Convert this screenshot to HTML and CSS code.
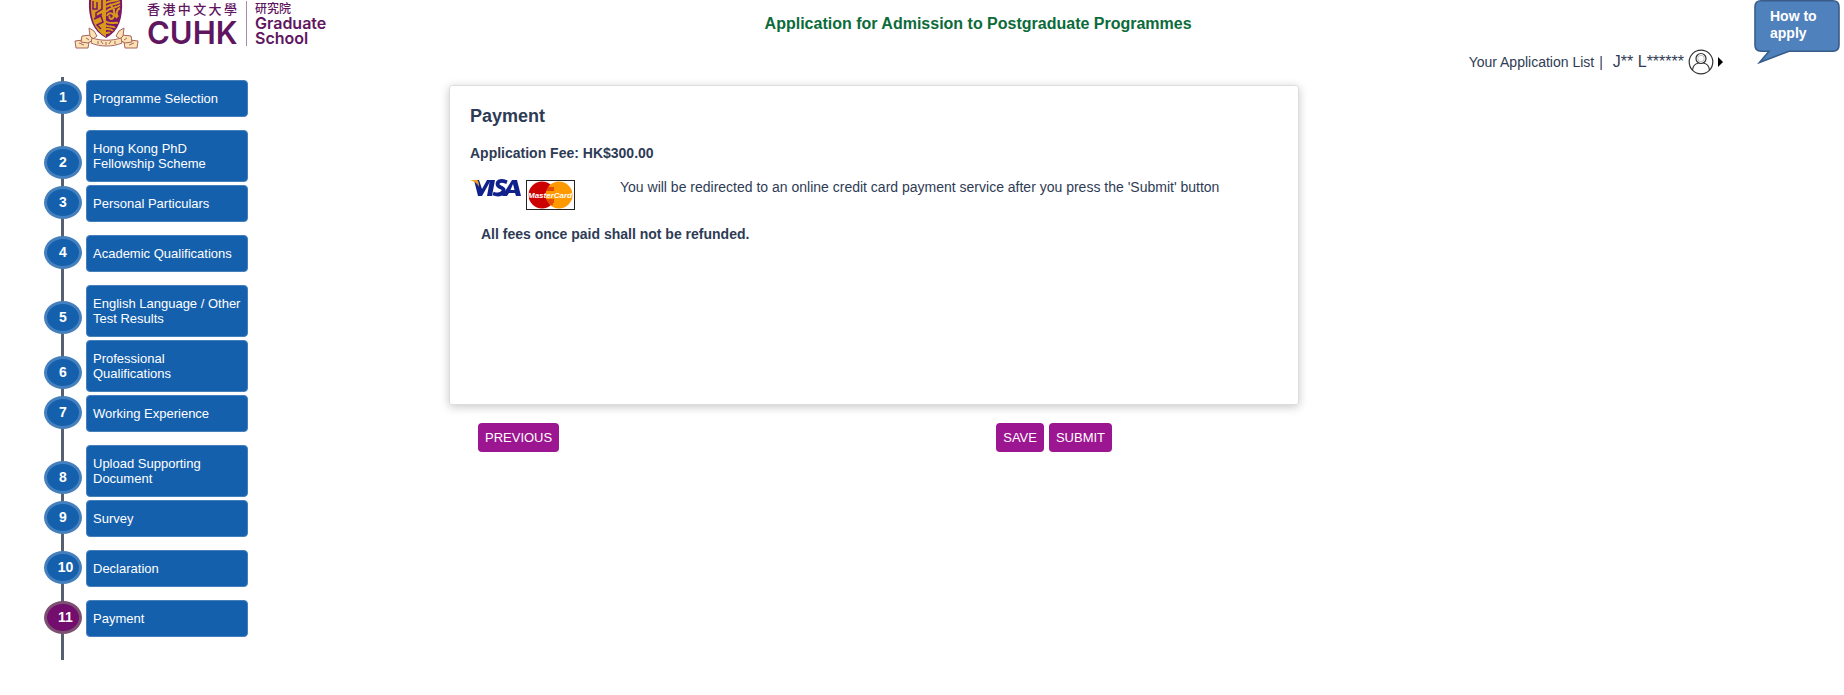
FILE: index.html
```html
<!DOCTYPE html>
<html lang="en">
<head>
<meta charset="utf-8">
<title>Application for Admission to Postgraduate Programmes</title>
<link rel="stylesheet" href="styles.css">
</head>
<body>
<header class="header">
  <a class="brand" href="#" aria-label="CUHK Graduate School">
    <svg class="crest" viewBox="0 0 66 50" aria-hidden="true">
      <path d="M15 0H48C49 18 45 31 32 38C19 31 14 18 15 0Z" fill="#7a1766"/>
      <path d="M17 0H32V37C20 30 16 18 17 0Z" fill="#d99a1c"/>
      <path d="M19 1v8h4V2M28 0v9l-6 4v4l6-3M20 19l7-3 2 6-6 3 4 4" fill="none" stroke="#7a1766" stroke-width="1.500"/>
      <path d="M32 3c4-3 8-1 14-4M32 7c4-3 8-2 14-5M32 12c3-4 8-3 14-7M33 16c2-5 9-2 6 2-2 2-5 0-3-2M46 8c-4 2-4 6-2 9M42 6c-3 3-3 8 1 12M31 21c5 4 9 1 13 2M31 25c4 3 8 0 10 3M31 29c4 0 6-1 8 2M32 33c2 0 3-1 4 0M36 4l4 6" fill="none" stroke="#d99a1c" stroke-width="2"/>
      <g fill="#fbe3b4" stroke="#a8655f" stroke-width="1">
        <path d="M1 41l8-1 6 2-1 6-12 0z"/>
        <path d="M64 41l-8-1-6 2 1 6 12 0z"/>
        <path d="M8 36l9-1 2 5-5 3-7-1z"/>
        <path d="M57 36l-9-1-2 5 5 3 7-1z"/>
        <path d="M15 28l5 3 3 5-4 3-3-3z"/>
        <path d="M50 28l-5 3-3 5 4 3 3-3z"/>
        <path d="M18 38c9 3 20 3 29 0l1 5c-9 4-22 4-31 0z"/>
      </g>
      <path d="M24 41v3M27 41l2 3M32 42v3M35 44l2-3M41 41v3M5 43l5 2M55 45l5-2M12 38l3 2M50 40l3-2" fill="none" stroke="#a8655f" stroke-width="1"/>
    </svg>
    <span class="brand-main">
      <span class="brand-zh" lang="zh-Hant">香港中文大學</span>
      <span class="brand-name">CUHK</span>
    </span>
    <span class="brand-school">
      <span class="school-zh" lang="zh-Hant">研究院</span>
      <span class="school-name">Graduate<br>School</span>
    </span>
  </a>
  <h1 class="page-title">Application for Admission to Postgraduate Programmes</h1>
  <nav class="account" aria-label="Account">
    <a href="#">Your Application List</a>
    <span class="divider">|</span>
    <button class="user" type="button">
      <span>J** L******</span>
      <svg class="avatar" viewBox="0 0 26 26" aria-hidden="true">
        <g fill="none" stroke="#333" stroke-width="1.2">
          <circle cx="13" cy="13" r="11.8"/>
          <circle cx="13" cy="9.5" r="5"/>
          <circle cx="13" cy="9.5" r="3.2" stroke="#999" stroke-width=".6"/>
          <path d="M4.500 21C5 16.500 8 14.500 10.500 14M21.500 21C21 16.500 18 14.500 15.500 14"/>
        </g>
      </svg>
      <svg class="caret" viewBox="0 0 5 10" aria-hidden="true"><path d="M0 0L5 5L0 10Z" fill="#000"/></svg>
    </button>
  </nav>
  <a class="help" href="#">
    <svg class="help-shape" viewBox="0 0 86 64" aria-hidden="true">
      <path d="M7 .8H79Q85 .8 85 7V45Q85 51.200 79 51.200H35L5.500 62.500L15 51.200H7Q1 51.200 1 45V7Q1 .8 7 .8Z" fill="#4f81bd" stroke="#385d8a" stroke-width="1.600"/>
    </svg>
    <span class="help-text">How to apply</span>
  </a>
</header>

<div class="layout">
  <nav aria-label="Application steps">
    <ol class="steps">
      <li><a class="step" href="#"><span class="num">1</span><span class="label">Programme Selection</span></a></li>
      <li><a class="step" href="#"><span class="num">2</span><span class="label">Hong Kong PhD Fellowship Scheme</span></a></li>
      <li><a class="step" href="#"><span class="num">3</span><span class="label">Personal Particulars</span></a></li>
      <li><a class="step" href="#"><span class="num">4</span><span class="label">Academic Qualifications</span></a></li>
      <li><a class="step" href="#"><span class="num">5</span><span class="label">English Language / Other Test Results</span></a></li>
      <li><a class="step" href="#"><span class="num">6</span><span class="label">Professional Qualifications</span></a></li>
      <li><a class="step" href="#"><span class="num">7</span><span class="label">Working Experience</span></a></li>
      <li><a class="step" href="#"><span class="num">8</span><span class="label">Upload Supporting Document</span></a></li>
      <li><a class="step" href="#"><span class="num">9</span><span class="label">Survey</span></a></li>
      <li><a class="step" href="#"><span class="num wide">10</span><span class="label">Declaration</span></a></li>
      <li><a class="step" href="#" aria-current="step"><span class="num wide current">11</span><span class="label">Payment</span></a></li>
    </ol>
  </nav>

  <main class="main">
    <section class="card">
      <h2 class="card-title">Payment</h2>
      <p class="fee">Application Fee: HK$300.00</p>
      <div class="method">
        <div class="cards">
          <svg class="visa" viewBox="0 0 51 18" role="img" aria-label="Visa">
            <path d="M4 1H9L12 10L17 1H21L12 17H8L5 5Z" fill="#10218b"/>
            <path d="M0 1H7Q9 2 9 8Q7 3 0 1Z" fill="#f0a020"/>
            <path d="M20 1H25L22 17H17ZM47 1H42L32 17H37L39 14H45L46 17H51ZM43 5L44.500 11H40.500Z" fill="#10218b"/>
            <path d="M37 3.200Q28 0 27.500 5Q27.500 7 31 8.500Q35 10 33 13Q30 17 23 14.500" fill="none" stroke="#10218b" stroke-width="3.800"/>
          </svg>
          <svg class="mastercard" viewBox="0 0 49 30" role="img" aria-label="MasterCard">
            <rect x=".5" y=".5" width="48" height="29" fill="#fff" stroke="#222"/>
            <circle cx="16" cy="15" r="13.500" fill="#c00"/>
            <circle cx="33" cy="15" r="13.500" fill="#f90"/>
            <path d="M21 8h7M20 10h8M20 20h8M21 22h7M22 24h5" stroke="#c00" stroke-width="1"/>
            <text class="mc-text" x="24" y="18" text-anchor="middle">MasterCard</text>
          </svg>
        </div>
        <p class="method-text">You will be redirected to an online credit card payment service after you press the 'Submit' button</p>
      </div>
      <p class="notice">All fees once paid shall not be refunded.</p>
    </section>
    <div class="actions">
      <button class="btn" type="button">PREVIOUS</button>
      <div class="actions-end">
        <button class="btn" type="button">SAVE</button>
        <button class="btn" type="submit">SUBMIT</button>
      </div>
    </div>
  </main>
</div>
</body>
</html>
```

FILE: styles.css
```css
* {
  box-sizing: border-box;
}

body {
  margin: 0;
  background: #fff;
  color: #2e3b55;
  font-family: "Liberation Sans", Arial, sans-serif;
  font-size: 14px;
  line-height: 18px;
}

h1, h2, p, ol {
  margin: 0;
  padding: 0;
}

a {
  color: inherit;
  text-decoration: none;
}

button {
  border: 0;
  font-family: inherit;
  cursor: pointer;
}

.header {
  display: grid;
  grid-template-columns: 41.5% 1fr auto auto;
  align-items: start;
  min-height: 77px;
  padding-right: 4px;
}

.brand {
  display: flex;
  align-items: flex-start;
  padding-left: 74px;
  color: #5f1560;
}

.crest {
  width: 66px;
  height: 50px;
}

.brand-main {
  display: flex;
  flex-direction: column;
  width: 92px;
  margin: 2px 7px 0;
}

.brand-zh {
  width: 90px;
  font-family: "Noto Sans CJK TC", sans-serif;
  font-size: 13px;
  font-weight: 500;
  line-height: 14px;
  text-align-last: justify;
}

.brand-name {
  font-family: Inter, sans-serif;
  font-size: 31px;
  font-weight: 600;
  line-height: 34px;
}

.brand-school {
  display: flex;
  flex-direction: column;
  gap: 2px;
  margin-top: 1px;
  padding-left: 8px;
  border-left: 1px solid #a98aa9;
}

.school-zh {
  font-family: "Noto Sans CJK TC", sans-serif;
  font-size: 12px;
  font-weight: 500;
  line-height: 13px;
}

.school-name {
  font-family: Inter, sans-serif;
  font-size: 16px;
  font-weight: 600;
  line-height: 15px;
}

.page-title {
  padding: 15px 0 0 1px;
  color: #0b6b3a;
  font-size: 16px;
  line-height: 18px;
}

.account {
  display: flex;
  align-items: center;
  gap: 5px;
  padding-top: 49px;
}

.user {
  display: flex;
  align-items: center;
  gap: 4px;
  padding: 0 0 0 5px;
  background: none;
  color: inherit;
  font-size: 16px;
}

.avatar {
  width: 26px;
  height: 26px;
}

.caret {
  width: 5px;
  height: 10px;
}

.help {
  position: relative;
  width: 86px;
  height: 64px;
  margin-left: 31px;
  padding: 8px 16px;
  color: #fff;
  font-weight: bold;
  line-height: 17px;
}

.help-shape {
  position: absolute;
  inset: 0;
}

.help-text {
  position: relative;
}

.layout {
  display: grid;
  grid-template-columns: 24.35% 46.1% 1fr;
  align-items: start;
}

.steps {
  width: 204px;
  margin-left: 44px;
  padding: 3px 0 10px;
  background: linear-gradient(#56606f, #56606f) 17px 0 / 3px 100% no-repeat;
  list-style: none;
}

.steps li {
  min-height: 50px;
  padding-bottom: 3px;
}

.step {
  display: flex;
  align-items: flex-end;
  gap: 4px;
  color: #fff;
  font-size: 13px;
  line-height: 15px;
}

.num {
  flex: none;
  width: 38px;
  height: 33px;
  margin-bottom: 3px;
  border: 3px solid #4580bd;
  border-radius: 50%;
  background: #1560ad;
  font-size: 14px;
  font-weight: bold;
  line-height: 27px;
  text-align: center;
}

.num.wide {
  padding-left: 5px;
}

.num.current {
  border-color: #7c5070;
  background: #730d6e;
}

.label {
  flex: 1;
  padding: 10px 5px 10px 6px;
  border: 1px solid #4580bd;
  border-radius: 4px;
  background: #1560ad;
}

.main {
  padding-top: 8px;
}

.card {
  min-height: 320px;
  padding: 20px;
  border: 1px solid #ddd;
  border-radius: 3px;
  box-shadow: 0 2px 10px rgba(0, 0, 0, 0.22);
}

.card-title {
  font-size: 18px;
  line-height: 20px;
}

.fee {
  margin-top: 18px;
  font-weight: bold;
}

.method {
  display: flex;
  gap: 45px;
  margin-top: 16px;
}

.cards {
  display: flex;
  gap: 5px;
  padding-top: 1px;
}

.visa {
  width: 51px;
  height: 18px;
}

.mastercard {
  width: 49px;
  height: 30px;
  margin-top: 1px;
}

.mc-text {
  fill: #fff;
  font-size: 8px;
  font-style: italic;
  font-weight: bold;
}

.notice {
  margin-top: 15px;
  padding-left: 11px;
  font-weight: bold;
}

.actions {
  display: flex;
  justify-content: space-between;
  margin-top: 18px;
  padding: 0 22% 0 29px;
}

.actions-end {
  display: flex;
  gap: 5px;
}

.btn {
  padding: 6px 7px;
  border-radius: 4px;
  background: #9c1591;
  color: #fff;
  font-size: 13px;
  line-height: 17px;
}
```
